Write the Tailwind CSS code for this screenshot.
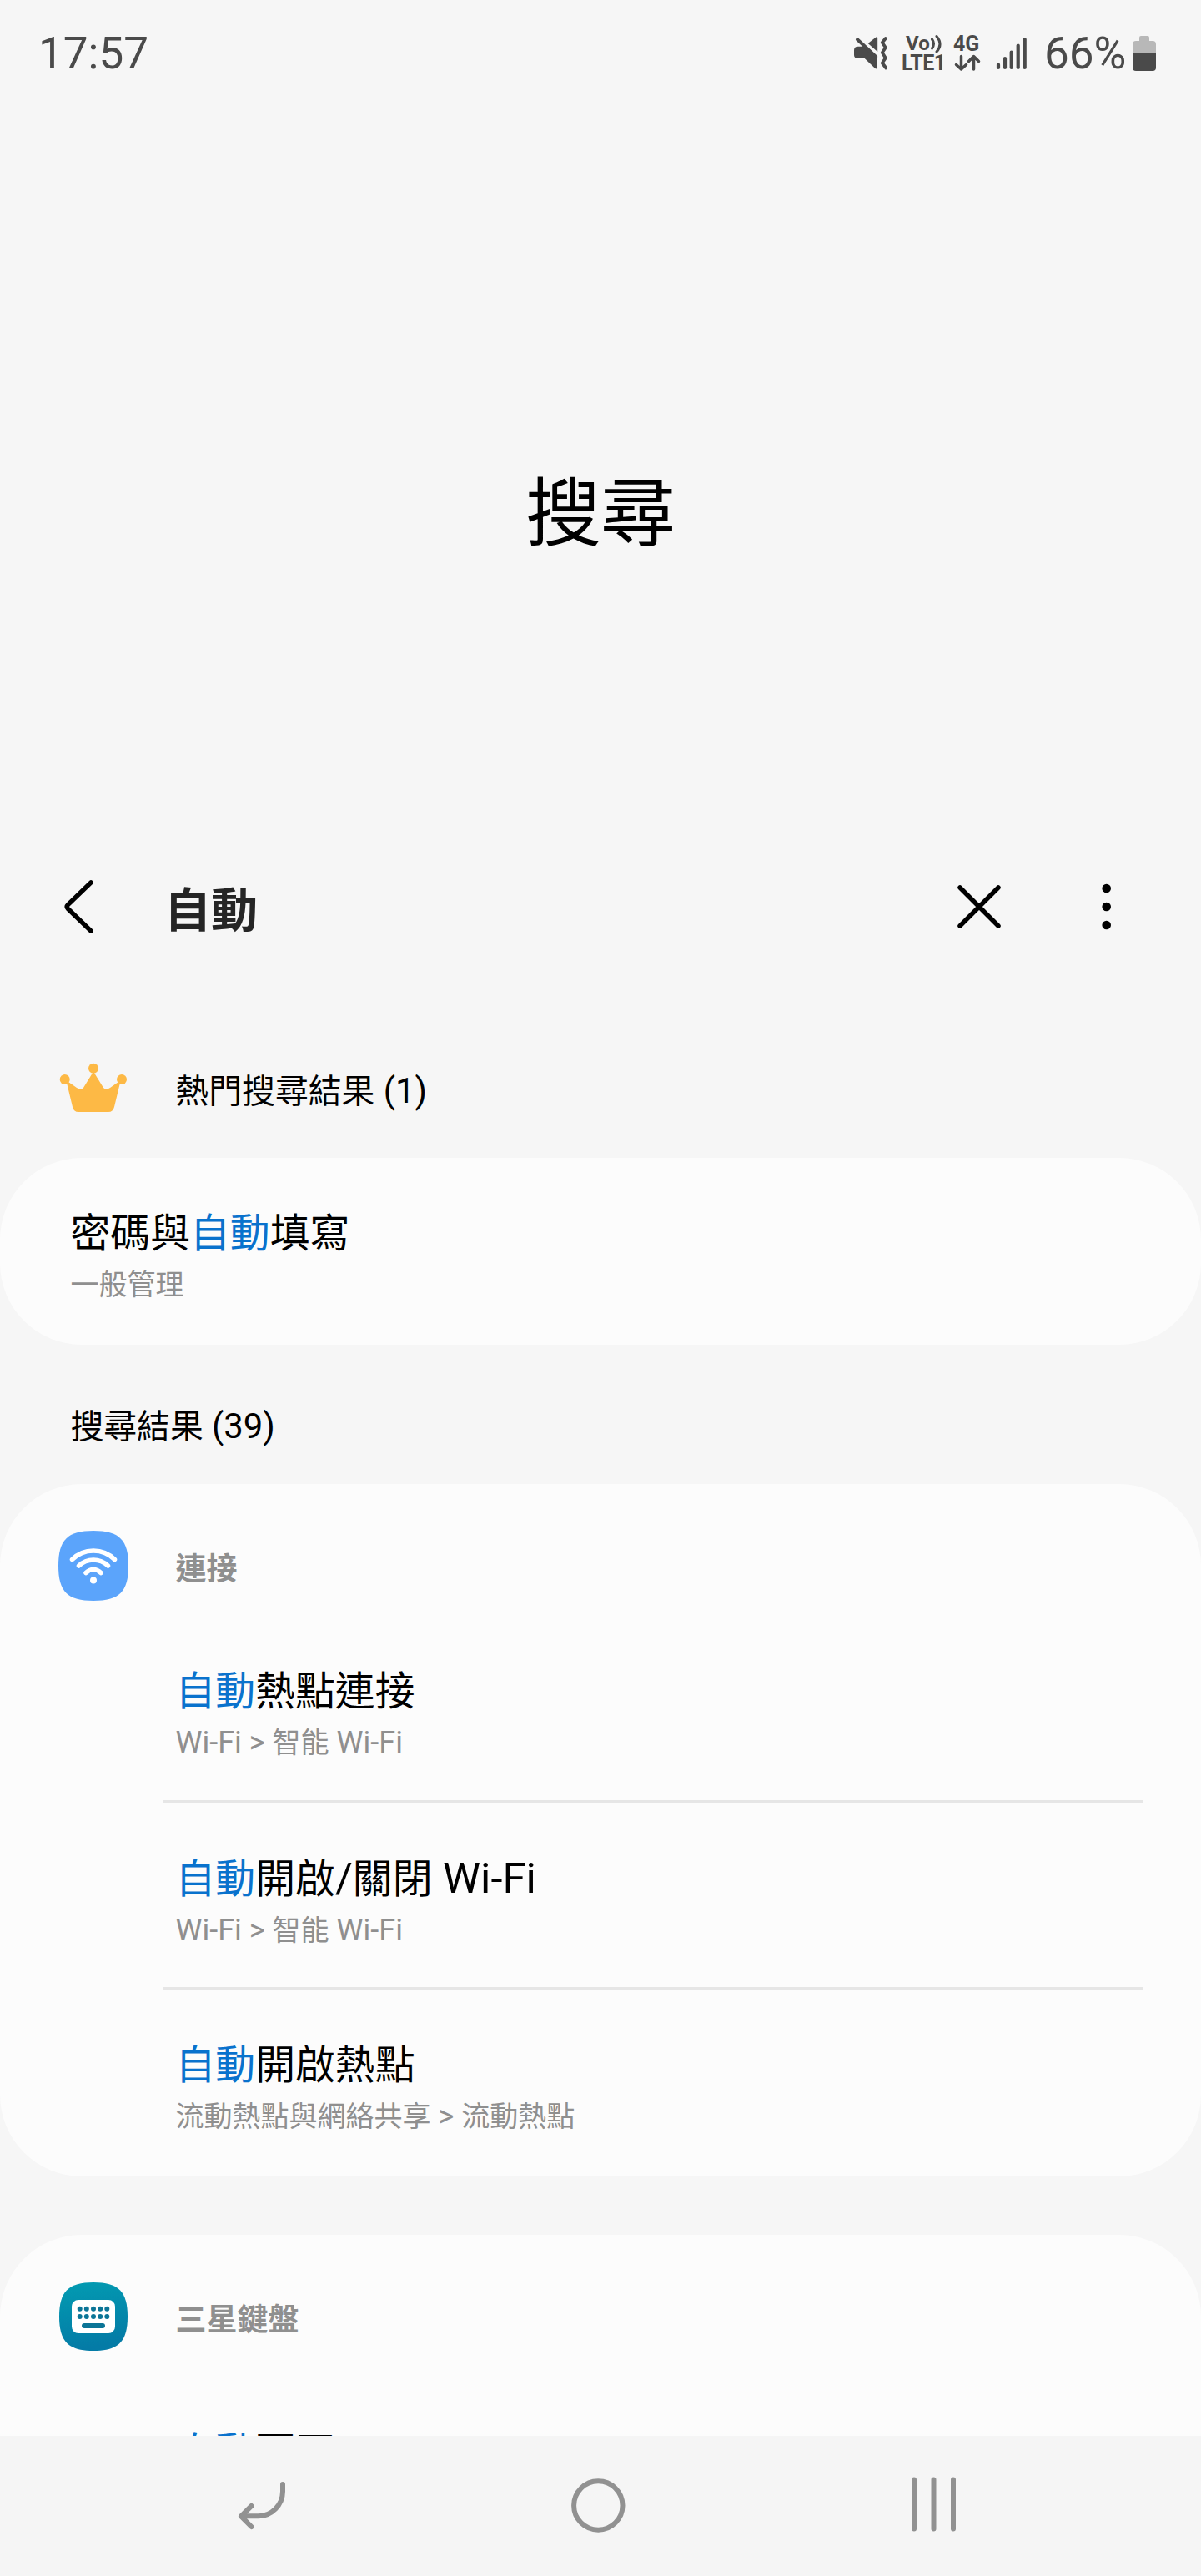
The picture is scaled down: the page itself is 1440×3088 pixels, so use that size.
<!DOCTYPE html>
<html lang="zh-Hant-HK">
<head>
<meta charset="utf-8">
<title>搜尋</title>
<script src="https://cdn.jsdelivr.net/npm/@tailwindcss/browser@4"></script>
</head>
<body class="bg-[#f6f6f6]">
<div class="flex h-[3088px] w-[1440px] flex-col overflow-hidden bg-[#f6f6f6] font-['Roboto','Noto_Sans_CJK_TC',sans-serif] text-black">

  <!-- Status bar -->
  <header class="flex h-32 shrink-0 items-center justify-between pl-[46px] pr-[54px] text-[#4a4a4a]">
    <div class="text-[53px] leading-[60px]">17:57</div>
    <div class="flex items-center">
      <svg class="h-[44px] w-[44px]" viewBox="0 0 44 44" fill="#4a4a4a" aria-label="靜音">
        <path d="M7 13.700h7L29.700 27v11.500q-.3 3-2.700 1.300L14.700 28H7q-5 0-5-4v-6q0-4.300 5-4.300z"/>
        <path d="M18.700 10 28.300 2.500q1.900-1 1.900 1V20z"/>
        <path d="M6 5.300 28.200 26" stroke="#4a4a4a" stroke-width="4" stroke-linecap="round"/>
        <path d="M39.800 4 35.800 9l4 6-4 6 4 6.500-4 6 4.500 6" fill="none" stroke="#4a4a4a" stroke-width="3.800" stroke-linecap="round" stroke-linejoin="round"/>
      </svg>
      <div class="ml-[15px] flex w-[52px] flex-col text-[25px] font-bold leading-[23px]">
        <div class="flex h-[23px] items-center pl-[5px] text-[24px]">Vo<svg class="h-[23px] w-[14px]" viewBox="0 0 14 23" fill="none" stroke="#4a4a4a" stroke-width="3" stroke-linecap="round"><path d="M2.500 6q4 5.500 0 11M8 2.500q8 9.500 0 18.500"/></svg></div>
        <div class="tracking-[-0.5px]">LTE1</div>
      </div>
      <div class="ml-[9px] flex w-[35px] flex-col text-[25px] font-bold leading-[23px]">
        <div class="pl-px">4G</div>
        <svg class="h-[23px] w-[34px]" viewBox="0 0 34 23" fill="none" stroke="#4a4a4a" stroke-width="3.500" stroke-linecap="round" stroke-linejoin="round"><path d="M10.500 3.500v15M4.500 13.500l6 5.500 6-5.500M25.500 19V4M19.500 9.500l6-6 6 6"/></svg>
      </div>
      <svg class="ml-[16px] h-[42px] w-[38px]" viewBox="0 0 38 42" stroke="#4a4a4a" stroke-width="4.200" stroke-linecap="round"><path d="M4 34.500V38M12 27v11M19.700 19.500V38M27.700 11.500V38M35.700 4v34"/></svg>
      <div class="ml-[21px] w-[106px] text-[53px] leading-[60px]">66%</div>
      <svg class="h-[44px] w-[28px]" viewBox="0 0 28 44"><path d="M8 3q0-2 2-2h8q2 0 2 2v4h4q4 0 4 4v10H0V11q0-4 4-4h4z" fill="#b8b8b8"/><path d="M0 21h28v18q0 4-4 4H4q-4 0-4-4z" fill="#4a4a4a"/></svg>
    </div>
  </header>

  <h1 class="flex h-[854px] shrink-0 items-start justify-center pt-[429px] text-[90px] leading-[120px]">搜尋</h1>

  <!-- Search field -->
  <div class="flex h-[210px] shrink-0 items-center pl-[72px] pr-[83px]">
    <svg class="h-[64px] w-[44px]" viewBox="0 0 44 64" fill="none" stroke="#000" stroke-width="5.500" stroke-linecap="round" stroke-linejoin="round"><path d="M37 3 9.500 29.500q-2.500 2.500 0 5L37 61"/></svg>
    <div class="ml-[81px] grow pt-[9px] text-[56px] font-bold leading-[72px] text-[#252525]">自動</div>
    <svg class="h-[60px] w-[60px]" viewBox="0 0 60 60" stroke="#000" stroke-width="5.500" stroke-linecap="round"><path d="M7 7l46 46M53 7 7 53"/></svg>
    <svg class="ml-[92px] h-[60px] w-[61px]" viewBox="0 0 61 60"><circle cx="30.700" cy="8" r="5.300"/><circle cx="30.700" cy="30" r="5.300"/><circle cx="30.700" cy="52" r="5.300"/></svg>
  </div>

  <div class="flex h-[196px] shrink-0 items-center pl-[70px] pt-[34px]">
    <svg class="mb-[6px] h-[84px] w-[84px]" viewBox="0 0 84 84" fill="#fdb945"><circle cx="7.700" cy="32" r="6"/><circle cx="42" cy="18.700" r="6"/><circle cx="76" cy="32" r="6"/><path d="M10 36q0-2 2-1l10 7q5 3.500 8 0L40.500 25q1.500-3 3 0L54 42q3 3.500 8 0l10-7q2-1 2 1L67 65q-1.500 6-7 6H24q-5.500 0-7-6z"/></svg>
    <div class="ml-[56.500px] pt-[3px] text-[39.800px] leading-[48px]">熱門搜尋結果<span class="text-[1.05em]"> (1)</span></div>
  </div>

  <section class="flex h-[224px] shrink-0 flex-col rounded-[98px] bg-[#fcfcfc] pl-[84.500px] pt-[59px]">
    <div class="text-[47.850px] leading-[64px]">密碼與<span class="text-[#0972cd]">自動</span>填寫</div>
    <div class="mt-[6px] text-[34px] leading-[46px] text-[#8f8f8f]">一般管理</div>
  </section>

  <div class="flex h-[167px] shrink-0 items-center pl-[84.500px] pt-[30px] text-[39.800px] leading-[48px]"><div>搜尋結果<span class="text-[1.05em]"> (39)</span></div></div>

  <section class="flex h-[830px] shrink-0 flex-col rounded-[98px] bg-[#fcfcfc]">
    <div class="flex h-[158px] shrink-0 items-center pl-[70px] pt-[38px]">
      <svg class="h-[84px] w-[84px]" viewBox="0 0 84 84">
        <path d="M42 0C73 0 84 11 84 42S73 84 42 84 0 73 0 42 11 0 42 0z" fill="#5ba4fb"/>
        <g fill="none" stroke="#fff" stroke-width="5.500" stroke-linecap="round"><path d="M16.500 34.500Q27 24 42 24t25.500 10.500M24.500 42Q32 35 42 35t17.500 7M33 50.500q4-4 9-4t9 4"/></g>
        <circle cx="42" cy="59.500" r="4" fill="#fff"/>
      </svg>
      <div class="ml-[56.500px] pt-[9px] text-[37px] font-bold leading-[48px] text-[#8f8f8f]">連接</div>
    </div>
    <div class="ml-[196px] mr-[70px] flex h-[224px] shrink-0 flex-col border-b-3 border-[#e6e6e6] pl-[14.500px] pt-[59px]">
      <div class="text-[47.850px] leading-[64px]"><span class="text-[#0972cd]">自動</span>熱點連接</div>
      <div class="mt-[6px] text-[34px] leading-[46px] text-[#8f8f8f]"><span class="text-[1.06em]">Wi-Fi &gt; </span>智能<span class="text-[1.06em]"> Wi-Fi</span></div>
    </div>
    <div class="ml-[196px] mr-[70px] flex h-[224px] shrink-0 flex-col border-b-3 border-[#e6e6e6] pl-[14.500px] pt-[59px]">
      <div class="text-[47.850px] leading-[63px]"><span class="text-[#0972cd]">自動</span>開啟<span class="text-[1.06em]">/</span>關閉<span class="text-[1.06em]"> Wi-Fi</span></div>
      <div class="mt-[6px] text-[34px] leading-[46px] text-[#8f8f8f]"><span class="text-[1.06em]">Wi-Fi &gt; </span>智能<span class="text-[1.06em]"> Wi-Fi</span></div>
    </div>
    <div class="ml-[196px] mr-[70px] flex h-[224px] shrink-0 flex-col pl-[14.500px] pt-[59px]">
      <div class="text-[47.850px] leading-[64px]"><span class="text-[#0972cd]">自動</span>開啟熱點</div>
      <div class="mt-[6px] text-[34px] leading-[46px] text-[#8f8f8f]">流動熱點與網絡共享<span class="text-[1.06em]"> &gt; </span>流動熱點</div>
    </div>
  </section>

  <section class="mt-[70px] flex h-[241px] shrink-0 flex-col overflow-hidden rounded-t-[98px] bg-[#fcfcfc]">
    <div class="flex h-[158px] shrink-0 items-center pl-[70px] pt-[38px]">
      <svg class="h-[84px] w-[84px]" viewBox="0 0 84 84">
        <defs><linearGradient id="kb" x1="0" y1="0" x2="0.200" y2="1"><stop offset="0" stop-color="#029cb2"/><stop offset="1" stop-color="#047ba6"/></linearGradient></defs>
        <path d="M42 1C72 1 83 12 83 42S72 83 42 83 1 72 1 42 12 1 42 1z" fill="url(#kb)"/>
        <rect x="16" y="22" width="52" height="40" rx="8" fill="#fff"/>
        <g fill="#0b7597"><circle cx="25.700" cy="32.700" r="3"/><circle cx="33.800" cy="32.700" r="3"/><circle cx="42" cy="32.700" r="3"/><circle cx="50.200" cy="32.700" r="3"/><circle cx="58.300" cy="32.700" r="3"/><circle cx="25.700" cy="42" r="3"/><circle cx="33.800" cy="42" r="3"/><circle cx="42" cy="42" r="3"/><circle cx="50.200" cy="42" r="3"/><circle cx="58.300" cy="42" r="3"/><rect x="28" y="50" width="28" height="6" rx="3"/></g>
      </svg>
      <div class="ml-[56.500px] pt-[9px] text-[37px] font-bold leading-[48px] text-[#8f8f8f]">三星鍵盤</div>
    </div>
    <div class="shrink-0 pl-[210.500px] pt-[71px] text-[47.850px] leading-[64px]"><span class="text-[#0972cd]">自動</span>更正</div>
  </section>

  <!-- Navigation bar -->
  <nav class="flex h-[168px] shrink-0 items-center justify-between bg-[#f5f5f5] pl-[275px] pr-[280px]">
    <svg class="h-[80px] w-[80px]" viewBox="0 0 80 80" fill="none" stroke="#919191" stroke-width="6" stroke-linecap="round" stroke-linejoin="round"><path d="M64 14v8.500C64 39 50.500 52.300 34.500 52.300H14M26.500 40 14 52.300 26.500 65"/></svg>
    <svg class="h-[80px] w-[80px]" viewBox="0 0 80 80" fill="none" stroke="#919191" stroke-width="6"><circle cx="39.300" cy="39.500" r="29.200"/></svg>
    <svg class="h-[80px] w-[80px]" viewBox="0 0 80 80" stroke="#919191" stroke-width="6" stroke-linecap="round"><path d="M16 8.500v59M39.500 8.500v59M63 8.500v59"/></svg>
  </nav>
</div>
</body>
</html>
